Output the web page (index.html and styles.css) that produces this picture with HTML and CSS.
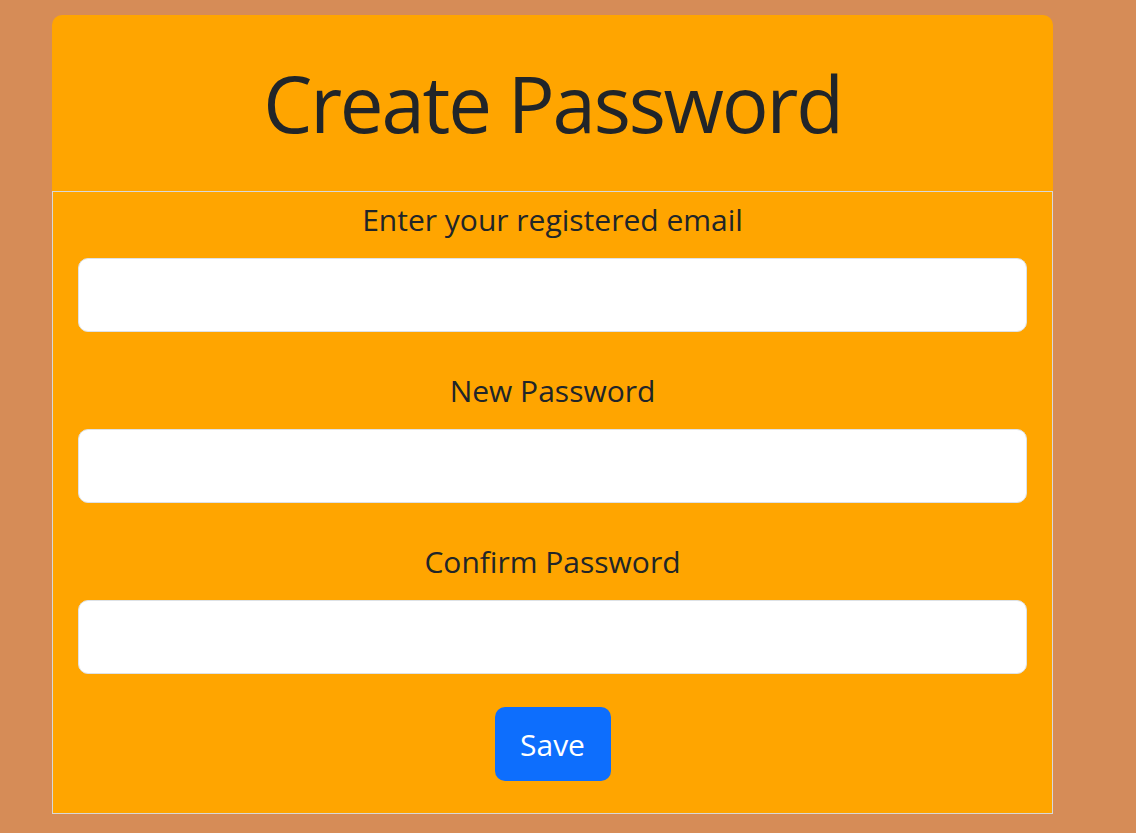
FILE: index.html
```html
<!DOCTYPE html>
<html>
<head>
<meta charset="utf-8">
<link rel="stylesheet" href="styles.css">
</head>
<body>
<div class="card">
  <div class="card-header">
    <h1 class="title">Create Password</h1>
  </div>
  <form class="card-body">
    <label class="field-label">Enter your registered email</label>
    <input class="field-input" type="email">
    <label class="field-label">New Password</label>
    <input class="field-input" type="password">
    <label class="field-label">Confirm Password</label>
    <input class="field-input" type="password">
    <button class="btn-save" type="button">Save</button>
  </form>
</div>
</body>
</html>
```
FILE: styles.css
```css
html, body {
  margin: 0;
  padding: 0;
}
body {
  background: #d68c57;
  font-family: "Open Sans", "Noto Sans", sans-serif;
  color: #212529;
  padding-top: 15px;
  height: 833px;
  box-sizing: border-box;
}
.card {
  width: 1001px;
  margin-left: 52px;
}
.card-header {
  background: #ffa500;
  border-radius: 10px 10px 0 0;
  height: 176px;
  display: flex;
  align-items: center;
  justify-content: center;
}
.title {
  margin: 0;
  font-weight: 400;
  font-size: 78px;
  letter-spacing: -2.2px;
  line-height: 1;
}
.card-body {
  background: #ffa500;
  border: 1px solid #d8d8d8;
  width: 1001px;
  box-sizing: border-box;
  display: flex;
  flex-direction: column;
  align-items: center;
  padding: 9px 25px 32px;
}
.field-label {
  font-size: 30px;
  line-height: 38px;
  text-align: center;
}
.field-input {
  width: 100%;
  height: 74px;
  box-sizing: border-box;
  border: 1px solid #dee2e6;
  border-radius: 10px;
  background: #fff;
  margin-top: 19px;
  margin-bottom: 40px;
}
.field-input:last-of-type {
  margin-bottom: 33px;
}
.btn-save {
  width: 116px;
  height: 74px;
  background: #0d6efd;
  color: #fff;
  border: none;
  border-radius: 10px;
  font-family: "Open Sans", "Noto Sans", sans-serif;
  font-size: 30px;
}
```
